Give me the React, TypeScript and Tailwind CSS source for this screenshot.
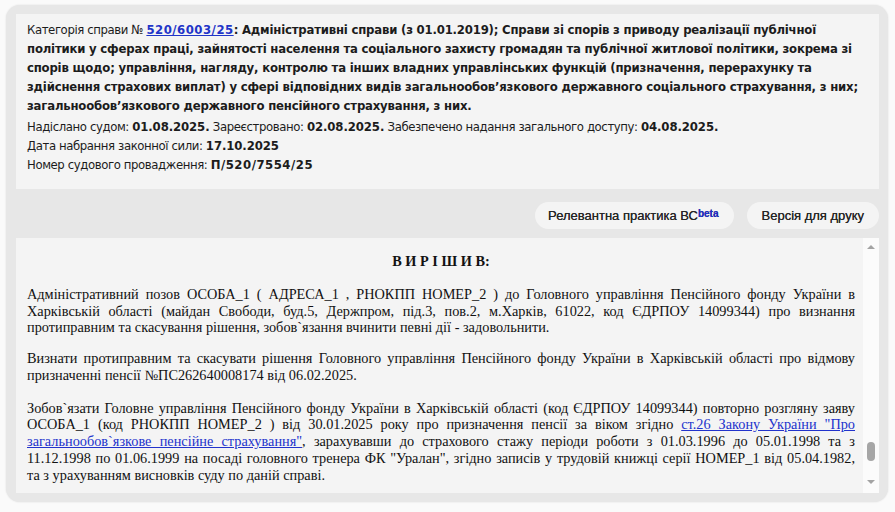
import React from "react";

const sans = {
  fontFamily: '"DejaVu Sans Condensed", "DejaVu Sans", sans-serif',
  fontStretch: "condensed" as const,
  letterSpacing: "-0.4px",
};

export default function App() {
  return (
    <div className="w-[895px] h-[512px] bg-[#fafafa] pt-[5px] pl-[6px] overflow-hidden">
      <div className="w-[882px] h-[497px] bg-[#e7e7e7] rounded-[14px] pt-[9px] pl-[10px] pr-[9px] flex flex-col shadow-[0_0_2px_rgba(0,0,0,0.12)]">
        {/* top info card */}
        <div
          className="h-[175px] bg-[#f4f4f4] pl-[11px] pt-[6px] text-[13px] leading-[19px] text-[#1c1c1c]"
          style={sans}
        >
          <div className="whitespace-nowrap">
            Категорія справи №{" "}
            <a className="font-bold text-[#1f35c8] underline tracking-[0.5px]">520/6003/25</a>
            <b className="tracking-[-0.2px]">: Адміністративні справи (з 01.01.2019); Справи зі спорів з приводу реалізації публічної</b>
            <br />
            <b className="tracking-[-0.2px]">політики у сферах праці, зайнятості населення та соціального захисту громадян та публічної житлової політики, зокрема зі</b>
            <br />
            <b className="tracking-[-0.2px]">спорів щодо; управління, нагляду, контролю та інших владних управлінських функцій (призначення, перерахунку та</b>
            <br />
            <b className="tracking-[-0.2px]">здійснення страхових виплат) у сфері відповідних видів загальнообов’язкового державного соціального страхування, з них;</b>
            <br />
            <b className="tracking-[-0.2px]">загальнообов’язкового державного пенсійного страхування, з них.</b>
          </div>
          <div className="mt-[2px] whitespace-nowrap">
            Надіслано судом: <b className="tracking-[-0.1px]">01.08.2025.</b> Зареєстровано:{" "}
            <b className="tracking-[-0.1px]">02.08.2025.</b> Забезпечено надання загального доступу:{" "}
            <b className="tracking-[-0.1px]">04.08.2025.</b>
          </div>
          <div className="whitespace-nowrap">
            Дата набрання законної сили: <b className="tracking-[-0.1px]">17.10.2025</b>
          </div>
          <div className="whitespace-nowrap">
            Номер судового провадження: <b className="tracking-[0.5px]">П/520/7554/25</b>
          </div>
        </div>

        {/* buttons */}
        <div
          className="mt-[13px] flex justify-end gap-[13px] text-[13px] text-[#262626] [text-shadow:0_0_0.4px_#333]"
          style={{ fontFamily: '"Liberation Sans", Arial, sans-serif' }}
        >
          <div className="h-[27px] rounded-[14px] bg-[#f4f4f4] pl-[13px] pr-[15px] flex items-center">
            <span>Релевантна практика ВС</span>
            <sup className="text-[10px] font-bold text-[#1f2fd0] relative top-[-2px]">beta</sup>
          </div>
          <div className="h-[27px] rounded-[14px] bg-[#f4f4f4] px-[15px] flex items-center">
            Версія для друку
          </div>
        </div>

        {/* content panel */}
        <div className="mt-[9px] h-[255px] bg-[#f4f4f4] flex overflow-hidden">
          <div
            className="flex-1 pl-[11px] pr-[8px] pt-[15px] text-[14.3px] text-[#111] text-justify"
            style={{ fontFamily: '"Liberation Serif", "Times New Roman", serif', lineHeight: "16.75px" }}
          >
            <p className="text-center font-bold mb-[16px]">В И Р І Ш И В:</p>
            <p className="mb-[14px]">
              Адміністративний позов ОСОБА_1 ( АДРЕСА_1 , РНОКПП НОМЕР_2 ) до Головного управління Пенсійного фонду України в Харківській області (майдан Свободи, буд.5, Держпром, під.3, пов.2, м.Харків, 61022, код ЄДРПОУ 14099344) про визнання протиправним та скасування рішення, зобов`язання вчинити певні дії - задовольнити.
            </p>
            <p className="mb-[16px]">
              Визнати протиправним та скасувати рішення Головного управління Пенсійного фонду України в Харківській області про відмову призначенні пенсії №ПС262640008174 від 06.02.2025.
            </p>
            <p className="mb-[16px]">
              Зобов`язати Головне управління Пенсійного фонду України в Харківській області (код ЄДРПОУ 14099344) повторно розгляну заяву ОСОБА_1 (код РНОКПП НОМЕР_2 ) від 30.01.2025 року про призначення пенсії за віком згідно{" "}
              <a className="text-[#2233cc] underline">ст.26 Закону України "Про загальнообов`язкове пенсійне страхування"</a>, зарахувавши до страхового стажу періоди роботи з 01.03.1996 до 05.01.1998 та з 11.12.1998 по 01.06.1999 на посаді головного тренера ФК "Уралан", згідно записів у трудовій книжці серії НОМЕР_1 від 05.04.1982, та{"\u00a0"}з урахуванням висновків суду по даній справі.
            </p>
          </div>
          {/* fake scrollbar */}
          <div className="w-[16px] bg-[#fbfbfb] flex flex-col items-center pt-[7px] pb-[9px]">
            <div className="w-0 h-0 border-l-[4px] border-r-[4px] border-b-[4px] border-l-transparent border-r-transparent border-b-[#a3a3a3]" />
            <div className="flex-1 w-full flex flex-col items-center justify-end pb-[19px]">
              <div className="w-[8px] h-[19px] rounded-full bg-[#a6a6a6]" />
            </div>
            <div className="w-0 h-0 border-l-[4px] border-r-[4px] border-t-[4px] border-l-transparent border-r-transparent border-t-[#a3a3a3]" />
          </div>
        </div>
      </div>
    </div>
  );
}
